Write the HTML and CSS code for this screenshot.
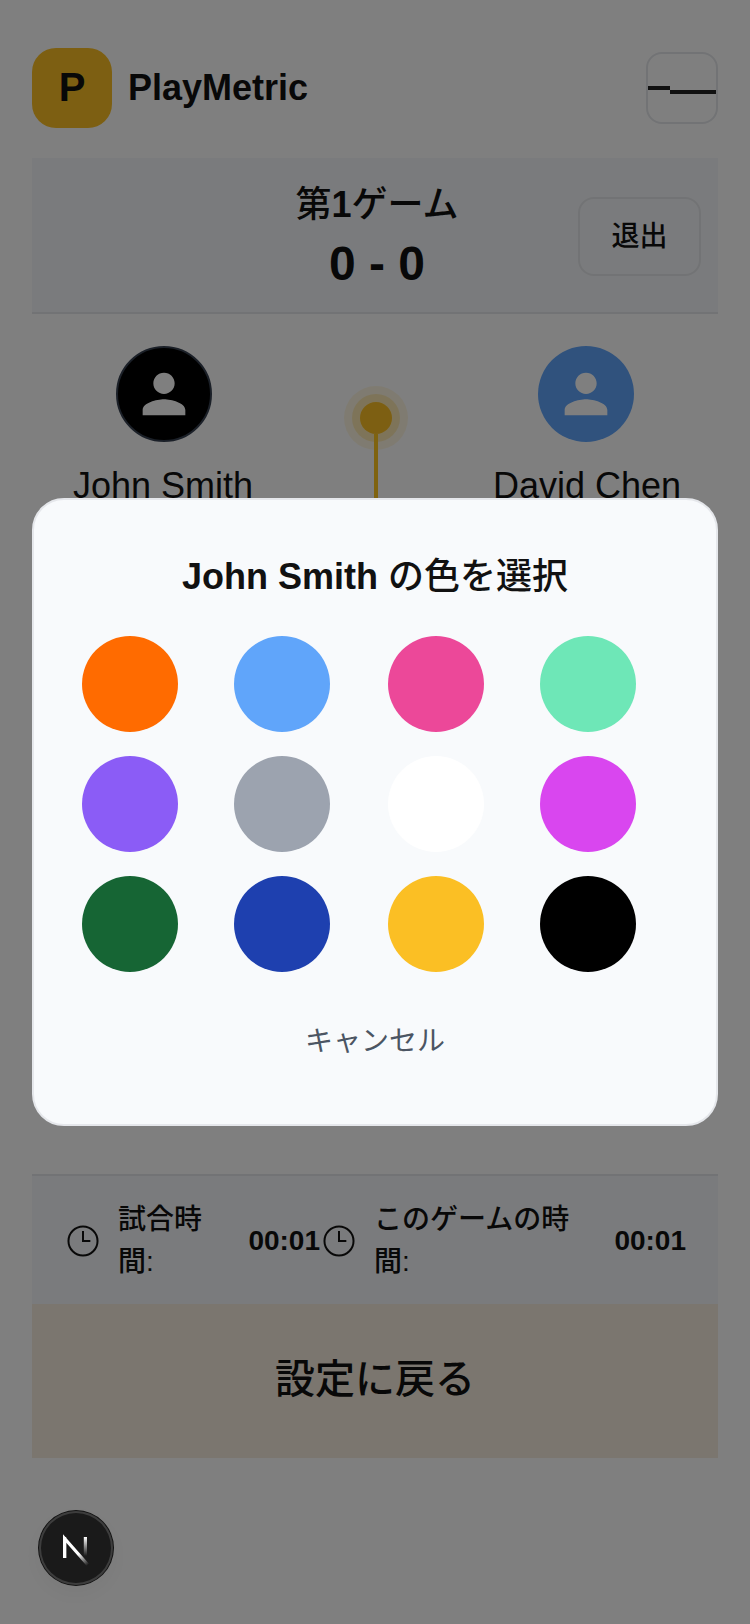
FILE: index.html
```html
<!DOCTYPE html>
<html lang="ja">

<head>
  <meta charset="UTF-8">
  <meta name="viewport" content="width=device-width, initial-scale=1.0">
  <title>PlayMetric</title>
  <link rel="stylesheet" href="styles.css">
</head>

<body>
  <div class="app">
    <header class="top-bar">
      <div class="brand">
        <div class="brand-logo">P</div>
        <span class="brand-name">PlayMetric</span>
      </div>
      <button class="menu-btn" aria-label="menu">
        <span class="menu-line-a"></span>
        <span class="menu-line-b"></span>
      </button>
    </header>

    <section class="game-head">
      <div class="game-info">
        <div class="game-title"><span class="jp">第</span>1<span class="jp">ゲーム</span></div>
        <div class="game-score">0 - 0</div>
      </div>
      <button class="btn-exit">退出</button>
    </section>

    <section class="court">
      <div class="player">
        <div class="avatar avatar-black">
          <svg class="avatar-icon" viewBox="0 0 24 24"><path d="M12 12c2.21 0 4-1.79 4-4s-1.79-4-4-4-4 1.79-4 4 1.79 4 4 4zm0 2c-2.67 0-8 1.34-8 4v2h16v-2c0-2.66-5.33-4-8-4z"/></svg>
        </div>
        <div class="player-name">John Smith</div>
      </div>
      <div class="marker">
        <div class="marker-dot"></div>
        <div class="marker-line"></div>
      </div>
      <div class="player">
        <div class="avatar avatar-blue">
          <svg class="avatar-icon" viewBox="0 0 24 24"><path d="M12 12c2.21 0 4-1.79 4-4s-1.79-4-4-4-4 1.79-4 4 1.79 4 4 4zm0 2c-2.67 0-8 1.34-8 4v2h16v-2c0-2.66-5.33-4-8-4z"/></svg>
        </div>
        <div class="player-name">David Chen</div>
      </div>
    </section>

    <section class="stats">
      <div class="stat">
        <svg class="clock" viewBox="0 0 24 24"><circle cx="12" cy="12" r="10.9"/><path d="M12 4.5v7.5h5.5"/></svg>
        <span class="stat-label">試合時間:</span>
        <span class="stat-value">00:01</span>
      </div>
      <div class="stat">
        <svg class="clock" viewBox="0 0 24 24"><circle cx="12" cy="12" r="10.9"/><path d="M12 4.5v7.5h5.5"/></svg>
        <span class="stat-label">このゲームの時間:</span>
        <span class="stat-value">00:01</span>
      </div>
    </section>

    <button class="btn-back">設定に戻る</button>
  </div>

  <!-- color picker dialog -->
  <div class="overlay">
    <div class="modal">
      <h2 class="modal-title">John Smith <span class="jp">の色を選択</span></h2>
      <div class="swatches">
        <div class="swatch swatch-orange"></div>
        <div class="swatch swatch-sky"></div>
        <div class="swatch swatch-pink"></div>
        <div class="swatch swatch-mint"></div>
        <div class="swatch swatch-purple"></div>
        <div class="swatch swatch-gray"></div>
        <div class="swatch swatch-white"></div>
        <div class="swatch swatch-fuchsia"></div>
        <div class="swatch swatch-green"></div>
        <div class="swatch swatch-blue"></div>
        <div class="swatch swatch-amber"></div>
        <div class="swatch swatch-black"></div>
      </div>
      <button class="btn-cancel">キャンセル</button>
    </div>
  </div>

  <div class="dev-badge">
    <svg class="dev-logo" viewBox="0 0 74 74">
      <defs>
        <linearGradient id="n-diag" x1="26" y1="26" x2="49" y2="54" gradientUnits="userSpaceOnUse">
          <stop offset="0.6" stop-color="#fff"/>
          <stop offset="1" stop-color="#fff" stop-opacity="0"/>
        </linearGradient>
        <linearGradient id="n-stem" x1="46" y1="26" x2="46" y2="45" gradientUnits="userSpaceOnUse">
          <stop offset="0" stop-color="#fff"/>
          <stop offset="1" stop-color="#fff" stop-opacity="0"/>
        </linearGradient>
      </defs>
      <path d="M25.6 47V27.5L49 54" fill="none" stroke="url(#n-diag)" stroke-width="3.2"/>
      <rect x="44.8" y="26" width="3.2" height="19" fill="url(#n-stem)"/>
      <path d="M25.6 47V26" fill="none" stroke="#fff" stroke-width="3.2"/>
    </svg>
  </div>
</body>

</html>
```

FILE: styles.css
```css
* {
  box-sizing: border-box;
}

html, body {
  margin: 0;
  height: 1624px;
  overflow: hidden;
}

body {
  background-color: #ffffff;
  color: #111111;
  font-family: "Liberation Sans", "Noto Sans CJK JP", sans-serif;
}

button {
  font-family: inherit;
  background: none;
  cursor: pointer;
}

.jp {
  font-weight: 500;
}

.app {
  padding: 48px 32px 0;
}

.top-bar {
  display: flex;
  justify-content: space-between;
  align-items: center;
  height: 80px;
}

.brand {
  display: flex;
  align-items: center;
  gap: 16px;
}

.brand-logo {
  display: flex;
  align-items: center;
  justify-content: center;
  width: 80px;
  height: 80px;
  padding-bottom: 2px;
  border-radius: 24px;
  background-color: #fbbf24;
  font-size: 40px;
  font-weight: 700;
}

.brand-name {
  font-size: 36px;
  font-weight: 700;
}

.menu-btn {
  display: flex;
  width: 72px;
  height: 72px;
  padding: 0;
  border: 2px solid #e5e7eb;
  border-radius: 16px;
  align-items: flex-start;
}

.menu-line-a {
  width: 22px;
  height: 4px;
  margin-top: 32px;
  background-color: #222222;
}

.menu-line-b {
  width: 46px;
  height: 4px;
  margin-top: 36px;
  background-color: #222222;
}

.game-head {
  display: flex;
  align-items: center;
  justify-content: center;
  position: relative;
  height: 156px;
  margin-top: 30px;
  padding: 2px 0 0 4px;
  background-color: #f5f7fa;
  border-bottom: 2px solid #e5e7eb;
}

.game-info {
  text-align: center;
}

.game-title {
  font-size: 36px;
  font-weight: 700;
  line-height: 48px;
}

.game-score {
  margin-top: 7px;
  font-size: 48px;
  font-weight: 700;
  line-height: 56px;
}

.btn-exit {
  position: absolute;
  right: 17px;
  top: 39px;
  width: 123px;
  height: 79px;
  padding: 0 0 6px;
  border: 2px solid #e5e7eb;
  border-radius: 16px;
  color: #111111;
  font-size: 28px;
  font-weight: 500;
}

.court {
  display: flex;
  justify-content: space-between;
  height: 860px;
  padding: 32px 36px 0 36px;
}

.player {
  display: flex;
  flex-direction: column;
  align-items: center;
  width: 190px;
}

.avatar {
  display: flex;
  align-items: center;
  justify-content: center;
  width: 96px;
  height: 96px;
  border-radius: 50%;
}

.avatar-black {
  margin-left: 2px;
  background-color: #000000;
  border: 2px solid #374151;
}

.avatar-blue {
  margin-right: 2px;
  background-color: #60a5fa;
}

.avatar-icon {
  flex: none;
  width: 64px;
  height: 64px;
  fill: #ffffff;
}

.player-name {
  margin-top: 20px;
  font-size: 36px;
  line-height: 48px;
  white-space: nowrap;
}

.marker {
  display: flex;
  flex-direction: column;
  align-items: center;
  padding-top: 56px;
  margin-left: 2px;
}

.marker-dot {
  width: 32px;
  height: 32px;
  border-radius: 50%;
  background-color: #fbbf24;
  box-shadow: 0 0 0 8px rgba(251, 191, 36, 0.25), 0 0 0 16px rgba(251, 191, 36, 0.13);
}

.marker-line {
  width: 4px;
  height: 70px;
  background-color: #ffc61f;
}

.stats {
  display: grid;
  grid-template-columns: 253px 1fr;
  column-gap: 3px;
  align-items: center;
  height: 130px;
  padding: 2px 32px 0 35px;
  background-color: #f5f7fa;
  border-top: 2px solid #e5e7eb;
}

.stat {
  display: flex;
  align-items: center;
}

.clock {
  flex: none;
  width: 32px;
  height: 32px;
  margin-right: 19px;
  fill: none;
  stroke: #111111;
  stroke-width: 1.5;
}

.stat-label {
  flex: 1;
  margin-right: 16px;
  font-size: 28px;
  font-weight: 500;
  line-height: 42px;
}

.stat-value {
  font-size: 28px;
  font-weight: 700;
}

.btn-back {
  display: block;
  width: 100%;
  height: 154px;
  padding: 0 0 10px;
  border: none;
  background-color: #f6ecdf;
  color: #111111;
  font-size: 40px;
  font-weight: 500;
}

.overlay {
  position: fixed;
  inset: 0;
  display: flex;
  align-items: center;
  justify-content: center;
  padding: 0 32px;
  background-color: rgba(0, 0, 0, 0.5);
}

.modal {
  width: 100%;
  height: 628px;
  padding: 53px 48px 0;
  background-color: #f8fafc;
  border: 2px solid #e5e7eb;
  border-radius: 32px;
}

.modal-title {
  margin: 0;
  font-size: 36px;
  font-weight: 700;
  line-height: 48px;
  text-align: center;
}

.swatches {
  display: grid;
  grid-template-columns: 152px 154px 152px 1fr;
  row-gap: 24px;
  margin-top: 35px;
}

.swatch {
  width: 96px;
  height: 96px;
  border-radius: 50%;
}

.swatch-orange { background-color: #ff6b00; }
.swatch-sky { background-color: #60a5fa; }
.swatch-pink { background-color: #ec4899; }
.swatch-mint { background-color: #6ee7b7; }
.swatch-purple { background-color: #8b5cf6; }
.swatch-gray { background-color: #9ca3af; }
.swatch-white { background-color: #ffffff; }
.swatch-fuchsia { background-color: #d946ef; }
.swatch-green { background-color: #166534; }
.swatch-blue { background-color: #1e40af; }
.swatch-amber { background-color: #fbbf24; }
.swatch-black { background-color: #000000; }

.btn-cancel {
  display: block;
  width: 100%;
  margin-top: 48px;
  padding: 0;
  border: none;
  color: #4b5563;
  font-size: 28px;
  line-height: 44px;
}

.dev-badge {
  position: fixed;
  left: 39px;
  top: 1511px;
  width: 74px;
  height: 74px;
  border-radius: 50%;
  background-color: #1a1a1a;
  box-shadow: 0 0 0 1px #111111, inset 0 0 0 2px #3d3d3d, 0 8px 24px rgba(0, 0, 0, 0.05);
}

.dev-logo {
  display: block;
  width: 74px;
  height: 74px;
}
```
